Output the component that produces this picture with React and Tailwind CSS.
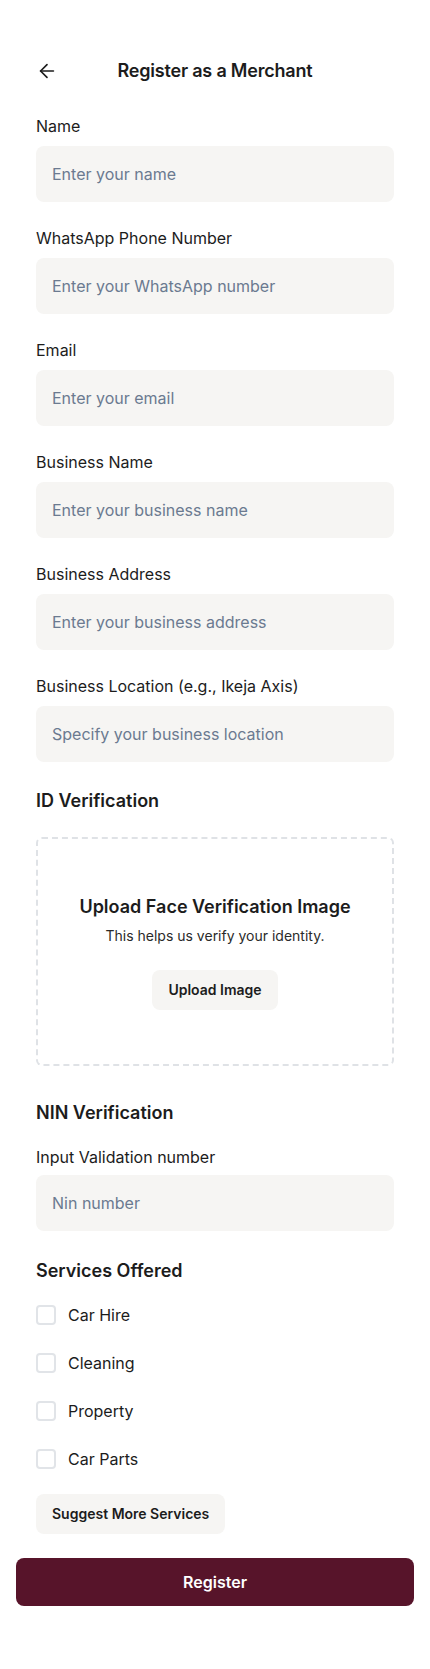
import { ArrowLeft } from 'lucide-react';

const fields = [
    { label: 'Name', placeholder: 'Enter your name' },
    { label: 'WhatsApp Phone Number', placeholder: 'Enter your WhatsApp number' },
    { label: 'Email', placeholder: 'Enter your email' },
    { label: 'Business Name', placeholder: 'Enter your business name' },
    { label: 'Business Address', placeholder: 'Enter your business address' },
    { label: 'Business Location (e.g., Ikeja Axis)', placeholder: 'Specify your business location' },
];

const services = ['Car Hire', 'Cleaning', 'Property', 'Car Parts'];

function Field({ label, placeholder }) {
    return (
        <div>
            <label className="block text-base leading-6 mb-2 text-[#1c1c1c]">{label}</label>
            <input
                type="text"
                placeholder={placeholder}
                className="w-full h-14 rounded-lg bg-[#f6f5f3] px-4 text-base text-[#1c1c1c] placeholder:text-[#6b7a90] outline-none"
            />
        </div>
    );
}

export default function App() {
    return (
        <div className="min-h-[1669px] bg-white font-['Inter',sans-serif] text-[#1c1c1c]">
            <div className="px-9 pt-[57px]">
                <div className="grid grid-cols-[24px_1fr_24px] items-center h-7">
                    <ArrowLeft size={22} strokeWidth={1.8} className="text-[#1c1c1c]" />
                    <h1 className="text-center text-lg font-semibold tracking-[-0.2px]">Register as a Merchant</h1>
                    <span />
                </div>

                <div className="mt-[29px] flex flex-col gap-6">
                    {fields.map((f) => (
                        <Field key={f.label} {...f} />
                    ))}
                </div>

                <h2 className="mt-[25px] text-lg leading-7 font-semibold">ID Verification</h2>
                <div className="mt-[22px] border-2 border-dashed border-[#dfe2e6] rounded-md py-[54px] flex flex-col items-center">
                    <p className="text-lg leading-7 font-semibold">Upload Face Verification Image</p>
                    <p className="mt-[5px] text-sm leading-5 text-[#2a2a2a]">This helps us verify your identity.</p>
                    <button className="mt-6 h-10 px-4 rounded-lg bg-[#f6f5f3] text-sm font-semibold">Upload Image</button>
                </div>

                <h2 className="mt-[33px] text-lg leading-7 font-semibold">NIN Verification</h2>
                <label className="block mt-[18px] text-base leading-6 mb-[6px]">Input Validation number</label>
                <input
                    type="text"
                    placeholder="Nin number"
                    className="w-full h-14 rounded-lg bg-[#f6f5f3] px-4 text-base placeholder:text-[#6b7a90] outline-none"
                />

                <h2 className="mt-[26px] text-lg leading-7 font-semibold">Services Offered</h2>
                <div className="mt-[18px] flex flex-col gap-6">
                    {services.map((s) => (
                        <label key={s} className="flex items-center gap-3 h-6">
                            <span className="w-5 h-5 rounded border-2 border-[#e1e4e8] bg-white" />
                            <span className="text-base">{s}</span>
                        </label>
                    ))}
                </div>

                <button className="mt-[23px] h-10 px-4 rounded-lg bg-[#f6f5f3] text-sm font-semibold">Suggest More Services</button>
            </div>

            <div className="px-4 mt-6">
                <button className="w-full h-12 rounded-lg bg-[#57142a] text-white text-base font-semibold">Register</button>
            </div>
        </div>
    );
}
